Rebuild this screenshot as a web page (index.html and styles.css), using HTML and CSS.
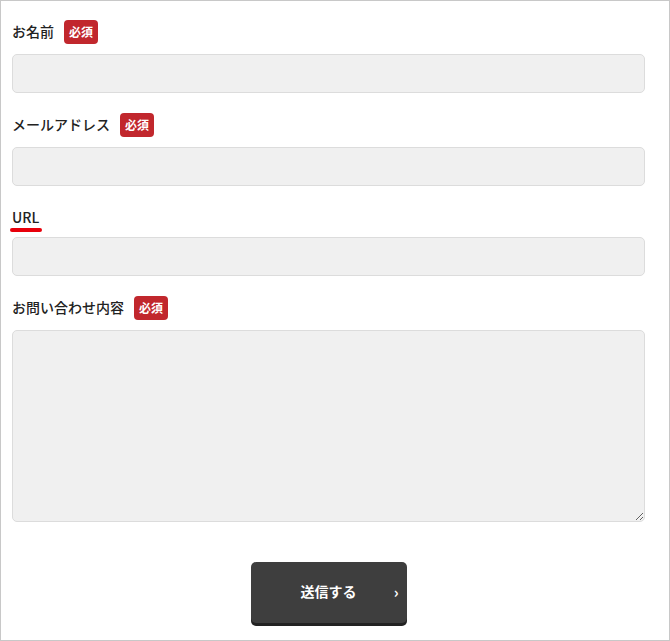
FILE: index.html
```html
<!doctype html>
<html lang="ja">
<head>
<meta charset="UTF-8">
<title>お問い合わせ</title>
<link rel="stylesheet" href="styles.css">
</head>
<body>
<div class="frame">
  <form class="contact">
    <div class="field">
      <div class="label-row"><label>お名前</label><span class="req">必須</span></div>
      <input type="text" class="box">
    </div>
    <div class="field">
      <div class="label-row"><label>メールアドレス</label><span class="req">必須</span></div>
      <input type="text" class="box">
    </div>
    <div class="field field-url">
      <div class="label-row"><label class="mark">URL</label></div>
      <input type="text" class="box">
    </div>
    <div class="field">
      <div class="label-row"><label>お問い合わせ内容</label><span class="req">必須</span></div>
      <textarea class="box area"></textarea>
    </div>
    <div class="submit-row">
      <button type="button" class="send">送信する<span class="arrow">›</span></button>
    </div>
  </form>
</div>
</body>
</html>
```

FILE: styles.css
```css
html,body{ margin:0;padding:0; }
body{ background:#fff;font-family:"Noto Sans CJK JP","Noto Sans",sans-serif;color:#222; }
.frame{ width:670px;height:641px;box-sizing:border-box;border:1px solid #c8c8c8; }
.contact{ padding:19px 24px 0 11px; }
.field{ margin-bottom:20px; }
.label-row{ height:24px;display:flex;align-items:center;gap:10px;margin-bottom:10px; }
.label-row label{ font-size:14px;font-weight:500;line-height:20px;margin-top:-3px; }
.req{ display:inline-block;width:34px;height:24px;background:#c1272d;color:#fff;border-radius:4px;font-size:12px;font-weight:700;line-height:24px;text-align:center; }
.field-url .label-row{ margin-bottom:7px; }
.mark{ position:relative; }
.mark:after{ content:"";position:absolute;left:-2px;top:21px;width:32px;height:4px;background:#e8000b;border-radius:2px; }
.box{ display:block;width:100%;box-sizing:border-box;height:39px;background:#f0f0f0;border:1px solid #dcdcdc;border-radius:5px;margin:0;padding:6px 10px;font:inherit; }
.area{ height:192px;resize:vertical; }
.submit-row{ display:flex;justify-content:center;padding-top:20px; }
.send{ position:relative;width:156px;height:61px;border:none;border-radius:5px;background:#3e3e3e;box-shadow:0 3px 0 #222;color:#fff;font-family:inherit;font-size:14px;font-weight:700;padding:0 0 4px; }
.arrow{ position:absolute;right:8px;top:calc(50% - 2px);transform:translateY(-50%);font-size:15px;font-weight:700;line-height:1; }
```
